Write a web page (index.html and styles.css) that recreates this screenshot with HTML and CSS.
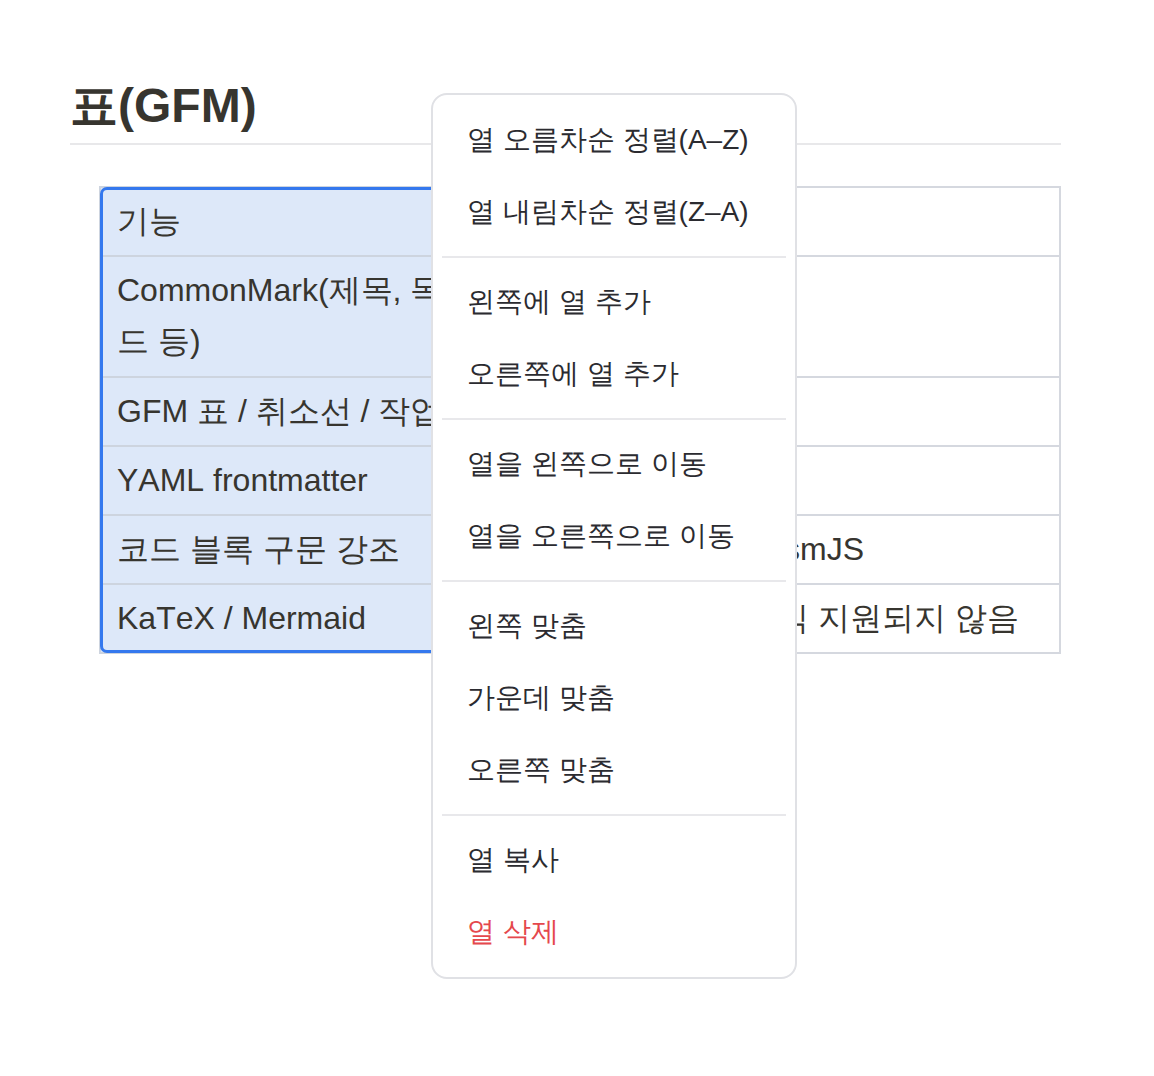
FILE: index.html
```html
<!DOCTYPE html>
<html lang="ko">
<head>
    <meta charset="UTF-8">
    <meta name="viewport" content="width=device-width, initial-scale=1.0">
    <title>표(GFM)</title>
    <link rel="stylesheet" href="styles.css">
</head>
<body>
    <main class="doc">
        <h1 class="doc-title">표(GFM)</h1>

        <div class="table-wrap">
            <table class="md-table">
                <colgroup>
                    <col class="col-feature">
                    <col class="col-support">
                    <col class="col-note">
                </colgroup>
                <thead>
                    <tr>
                        <th class="sel">기능</th>
                        <th>지원</th>
                        <th></th>
                    </tr>
                </thead>
                <tbody>
                    <tr>
                        <td class="sel">CommonMark(제목, 목록, 코드 등)</td>
                        <td>예</td>
                        <td></td>
                    </tr>
                    <tr>
                        <td class="sel">GFM 표 / 취소선 / 작업 목록</td>
                        <td>예</td>
                        <td></td>
                    </tr>
                    <tr>
                        <td class="sel">YAML frontmatter</td>
                        <td>예</td>
                        <td></td>
                    </tr>
                    <tr>
                        <td class="sel">코드 블록 구문 강조</td>
                        <td>예</td>
                        <td>PrismJS</td>
                    </tr>
                    <tr>
                        <td class="sel">KaTeX / Mermaid</td>
                        <td>아니요</td>
                        <td>정식 지원되지 않음</td>
                    </tr>
                </tbody>
            </table>
            <!-- outline of the selected column -->
            <div class="col-outline"></div>
        </div>
    </main>

    <!-- column context menu -->
    <ul class="ctx-menu">
        <li class="ctx-item">열 오름차순 정렬(A–Z)</li>
        <li class="ctx-item">열 내림차순 정렬(Z–A)</li>
        <li class="ctx-sep"></li>
        <li class="ctx-item">왼쪽에 열 추가</li>
        <li class="ctx-item">오른쪽에 열 추가</li>
        <li class="ctx-sep"></li>
        <li class="ctx-item">열을 왼쪽으로 이동</li>
        <li class="ctx-item">열을 오른쪽으로 이동</li>
        <li class="ctx-sep"></li>
        <li class="ctx-item">왼쪽 맞춤</li>
        <li class="ctx-item">가운데 맞춤</li>
        <li class="ctx-item">오른쪽 맞춤</li>
        <li class="ctx-sep"></li>
        <li class="ctx-item">열 복사</li>
        <li class="ctx-item danger">열 삭제</li>
    </ul>
</body>
</html>
```

FILE: styles.css
```css
body, html {
    margin: 0;
    padding: 0;
    background: #ffffff;
    /* Hangul comes from the system sans-serif fallback */
    font-family: "Liberation Sans", sans-serif;
    font-kerning: none;
    color: #37352f;
}

.doc {
    width: 991px;
    margin-left: 70px;
    padding-top: 76px;
}

.doc-title {
    margin: 0;
    font-size: 48px;
    line-height: 60px;
    font-weight: bold;
    padding: 0 0 7px;
    border-bottom: 2px solid #e8e8ea;
}

/* Table */
.table-wrap {
    position: relative;
    margin: 41px 0 0 29px;
    width: 960px;
}

.md-table {
    width: 960px;
    table-layout: fixed;
    border-collapse: collapse;
    font-size: 32px;
    line-height: 1.6;
}

.col-feature { width: 460px; }
.col-support { width: 168px; }
.col-note { width: 332px; }

.md-table th,
.md-table td {
    border: 2px solid #d5d8df;
    padding: 8px 16px;
    text-align: left;
    font-weight: normal;
    vertical-align: top;
}

.md-table .sel {
    background-color: #dde8f9;
    border-color: #cdd4df;
}

.col-outline {
    position: absolute;
    top: 1px;
    left: 1px;
    bottom: 1px;
    width: 455px;
    border: 3px solid #3478ee;
    border-radius: 7px;
    pointer-events: none;
}

/* Context menu */
.ctx-menu {
    position: absolute;
    top: 93px;
    left: 431px;
    width: 344px;
    margin: 0;
    padding: 9px;
    list-style: none;
    background: #ffffff;
    border: 2px solid #e0e1e5;
    border-radius: 16px;
    font-size: 28px;
    color: #2b2b30;
}

.ctx-item {
    height: 72px;
    line-height: 72px;
    padding: 0 25px;
    white-space: nowrap;
}

.ctx-item.danger {
    color: #e5484d;
}

.ctx-sep {
    height: 2px;
    margin: 8px 0;
    background: #e8e8eb;
}
```
